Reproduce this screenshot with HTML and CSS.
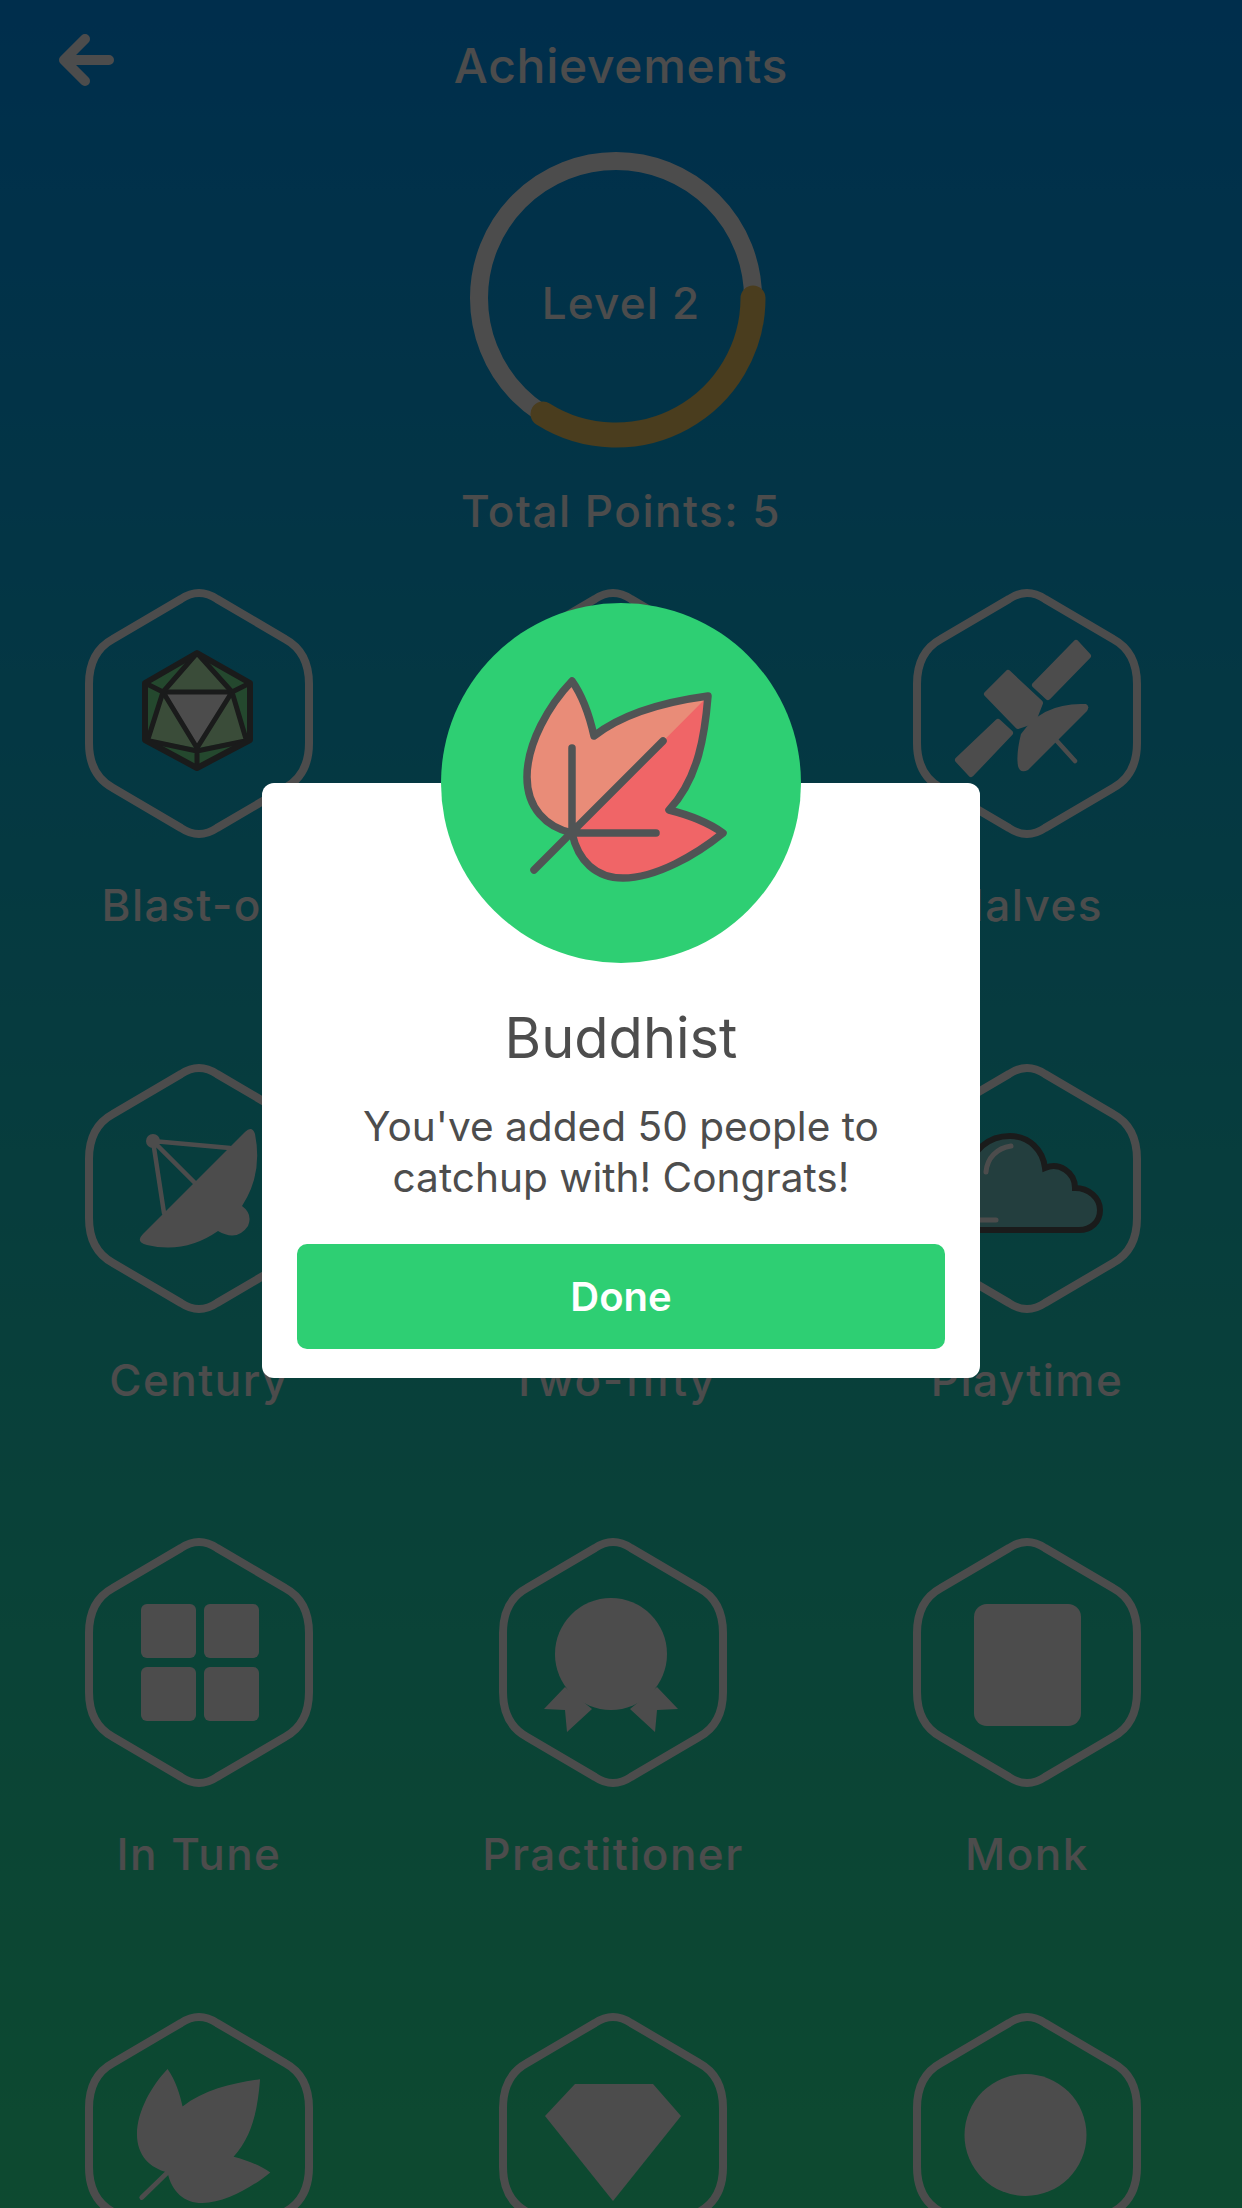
FILE: index.html
```html
<!DOCTYPE html>
<html>
<head>
  <meta charset="UTF-8">
  <title>Achievements</title>
  <link rel="stylesheet" href="styles.css">
</head>
<body>
  <div class="screen">
    <header class="topbar">
      <svg class="back" width="60" height="60" viewBox="0 0 60 60">
        <path d="M50 26H6M26 5L5 26L26 47"/>
      </svg>
      <h1>Achievements</h1>
    </header>

    <div class="level">
      <svg class="ring" width="310" height="310" viewBox="0 0 310 310">
        <circle class="ring-track" cx="150" cy="155" r="137"/>
        <path class="ring-value" d="M287 155A137 137 0 0 1 77 271"/>
      </svg>
      <span class="level-text">Level 2</span>
    </div>
    <p class="points">Total Points: 5</p>

    <div class="badges">
      <div class="badge">
        <svg class="hex" viewBox="0 0 228 249">
          <path class="hex-line" d="M96 10Q114 -2 132 10L200 50Q224 63 224 95V154Q224 186 200 199L132 239Q114 251 96 239L28 199Q4 186 4 154V95Q4 63 28 50Z"/>
          <g class="dice">
            <polygon class="dice-dark" points="112,64 165,94 165,151 112,179 60,151 60,94"/>
            <polygon class="dice-light" points="112,64 147,103 78,103"/>
            <polygon class="dice-light" points="78,103 112,159 63,150"/>
            <polygon class="dice-light" points="147,103 112,159 161,150"/>
            <polygon class="dice-top" points="78,103 147,103 112,159"/>
            <path d="M112 64L78 103M112 64L147 103M60 94L78 103M165 94L147 103M78 103L63 150M147 103L161 150M60 151L112 162L165 151M112 159V179"/>
            <polygon class="dice-outer" points="112,64 165,94 165,151 112,179 60,151 60,94"/>
          </g>
        </svg>
        <span class="badge-name">Blast-off</span>
      </div>

      <div class="badge">
        <svg class="hex" viewBox="0 0 228 249">
          <path class="hex-line" d="M96 10Q114 -2 132 10L200 50Q224 63 224 95V154Q224 186 200 199L132 239Q114 251 96 239L28 199Q4 186 4 154V95Q4 63 28 50Z"/>
        </svg>
      </div>

      <div class="badge">
        <svg class="hex" viewBox="0 0 228 249">
          <path class="hex-line" d="M96 10Q114 -2 132 10L200 50Q224 63 224 95V154Q224 186 200 199L132 239Q114 251 96 239L28 199Q4 186 4 154V95Q4 63 28 50Z"/>
          <polygon class="solid round" points="163,54 175,67 135,108 122,96"/>
          <polygon class="solid round" points="85,133 97,144 58,185 45,171"/>
          <polygon class="solid round" points="95,84 74,105 105,137 120,132 127,114"/>
          <path class="solid" d="M173 115Q130 113 108 145Q103 165 105 177Q107 185 115 181L174 122Q177 117 173 115Z"/>
          <path class="thin" d="M143 151L162 172"/>
        </svg>
        <span class="badge-name">Halves</span>
      </div>

      <div class="badge">
        <svg class="hex" viewBox="0 0 228 249">
          <path class="hex-line" d="M96 10Q114 -2 132 10L200 50Q224 63 224 95V154Q224 186 200 199L132 239Q114 251 96 239L28 199Q4 186 4 154V95Q4 63 28 50Z"/>
          <path class="solid" d="M58 170L160 68Q167 61 170 70Q178 110 157 142Q168 150 163 162Q152 178 133 167Q100 190 62 181Q50 178 58 170Z"/>
          <circle class="solid" cx="68" cy="77" r="7"/>
          <path class="thin" d="M145 84L68 77L110 119M68 77L79 149"/>
        </svg>
        <span class="badge-name">Century</span>
      </div>

      <div class="badge">
        <svg class="hex" viewBox="0 0 228 249">
          <path class="hex-line" d="M96 10Q114 -2 132 10L200 50Q224 63 224 95V154Q224 186 200 199L132 239Q114 251 96 239L28 199Q4 186 4 154V95Q4 63 28 50Z"/>
        </svg>
        <span class="badge-name">Two-fifty</span>
      </div>

      <div class="badge">
        <svg class="hex" viewBox="0 0 228 249">
          <path class="hex-line" d="M96 10Q114 -2 132 10L200 50Q224 63 224 95V154Q224 186 200 199L132 239Q114 251 96 239L28 199Q4 186 4 154V95Q4 63 28 50Z"/>
          <path class="cloud" d="M166 166H60C40 166 30 152 30 136C30 120 42 108 56 108C58 86 76 72 97 72C116 72 130 86 132 104C146 98 162 108 162 124C176 124 187 134 187 146C187 158 178 166 166 166Z"/>
          <path class="cloud-shine" d="M98 82C84 84 74 94 73 108M50 156H83"/>
        </svg>
        <span class="badge-name">Playtime</span>
      </div>

      <div class="badge">
        <svg class="hex" viewBox="0 0 228 249">
          <path class="hex-line" d="M96 10Q114 -2 132 10L200 50Q224 63 224 95V154Q224 186 200 199L132 239Q114 251 96 239L28 199Q4 186 4 154V95Q4 63 28 50Z"/>
          <rect class="solid" x="56" y="66" width="55" height="54" rx="6"/>
          <rect class="solid" x="119" y="66" width="55" height="54" rx="6"/>
          <rect class="solid" x="56" y="129" width="55" height="54" rx="6"/>
          <rect class="solid" x="119" y="129" width="55" height="54" rx="6"/>
        </svg>
        <span class="badge-name">In Tune</span>
      </div>

      <div class="badge">
        <svg class="hex" viewBox="0 0 228 249">
          <path class="hex-line" d="M96 10Q114 -2 132 10L200 50Q224 63 224 95V154Q224 186 200 199L132 239Q114 251 96 239L28 199Q4 186 4 154V95Q4 63 28 50Z"/>
          <circle class="solid" cx="112" cy="116" r="56"/>
          <polygon class="solid" points="66,149 45,171 66,172 68,194 93,171"/>
          <polygon class="solid" points="158,149 179,171 158,172 156,194 131,171"/>
        </svg>
        <span class="badge-name">Practitioner</span>
      </div>

      <div class="badge">
        <svg class="hex" viewBox="0 0 228 249">
          <path class="hex-line" d="M96 10Q114 -2 132 10L200 50Q224 63 224 95V154Q224 186 200 199L132 239Q114 251 96 239L28 199Q4 186 4 154V95Q4 63 28 50Z"/>
          <rect class="solid" x="61" y="66" width="107" height="122" rx="13"/>
        </svg>
        <span class="badge-name">Monk</span>
      </div>

      <div class="badge">
        <svg class="hex" viewBox="0 0 228 249">
          <path class="hex-line" d="M96 10Q114 -2 132 10L200 50Q224 63 224 95V154Q224 186 200 199L132 239Q114 251 96 239L28 199Q4 186 4 154V95Q4 63 28 50Z"/>
          <g transform="translate(-6.5 3) scale(.68)">
            <path class="solid" d="M131 78C143 95 149 115 153 133C185 108 230 98 267 93C264 130 258 175 228 207C248 212 268 220 282 230C255 252 215 275 182 275C155 275 137 258 131 230C105 224 86 205 86 174C86 140 108 102 131 78Z"/>
            <path class="thin wide" d="M131 230L93 267"/>
          </g>
        </svg>
      </div>

      <div class="badge">
        <svg class="hex" viewBox="0 0 228 249">
          <path class="hex-line" d="M96 10Q114 -2 132 10L200 50Q224 63 224 95V154Q224 186 200 199L132 239Q114 251 96 239L28 199Q4 186 4 154V95Q4 63 28 50Z"/>
          <polygon class="solid" points="76,71 154,71 182,103 114,188 46,103"/>
        </svg>
      </div>

      <div class="badge">
        <svg class="hex" viewBox="0 0 228 249">
          <path class="hex-line" d="M96 10Q114 -2 132 10L200 50Q224 63 224 95V154Q224 186 200 199L132 239Q114 251 96 239L28 199Q4 186 4 154V95Q4 63 28 50Z"/>
          <circle class="solid" cx="112.5" cy="122" r="61"/>
        </svg>
      </div>
    </div>
  </div>

  <div class="overlay">
    <div class="modal">
      <div class="modal-icon">
        <svg width="360" height="360" viewBox="0 0 360 360">
          <path class="leaf-red" d="M131 78C143 95 149 115 153 133C185 108 230 98 267 93C264 130 258 175 228 207C248 212 268 220 282 230C255 252 215 275 182 275C155 275 137 258 131 230C105 224 86 205 86 174C86 140 108 102 131 78Z"/>
          <path class="leaf-light" d="M131 78C143 95 149 115 153 133C185 108 230 98 267 93L131 230C105 224 86 205 86 174C86 140 108 102 131 78Z"/>
          <path class="leaf-line" d="M131 78C143 95 149 115 153 133C185 108 230 98 267 93C264 130 258 175 228 207C248 212 268 220 282 230C255 252 215 275 182 275C155 275 137 258 131 230C105 224 86 205 86 174C86 140 108 102 131 78Z"/>
          <path class="leaf-line" d="M93 267L222 138M131 145V230H215"/>
        </svg>
      </div>
      <h2>Buddhist</h2>
      <p>You've added 50 people to catchup with! Congrats!</p>
      <button type="button">Done</button>
    </div>
  </div>
</body>
</html>
```

FILE: styles.css
```css
html, body {
  margin: 0;
  padding: 0;
}
body {
  width: 1242px;
  height: 2208px;
  overflow: hidden;
  position: relative;
  font-family: Inter, "Liberation Sans", sans-serif;
}
.screen {
  height: 2208px;
  overflow: hidden;
  background: linear-gradient(to bottom, #009bff, #2ef7a0);
  color: #fff;
}
.topbar {
  display: grid;
  grid-template-columns: 1fr auto 1fr;
  align-items: start;
  height: 143px;
  padding: 0 60px;
  box-sizing: border-box;
}
.back {
  margin-top: 34px;
  margin-left: -1px;
}
.back path {
  fill: none;
  stroke: #fff;
  stroke-width: 10;
  stroke-linecap: round;
  stroke-linejoin: round;
}
h1 {
  margin: 36px 0 0;
  font-size: 48px;
  line-height: 60px;
  font-weight: 500;
  letter-spacing: 0.7px;
}
.level {
  position: relative;
  width: 310px;
  height: 310px;
  margin: 0 auto;
}
.ring {
  display: block;
}
.ring-track {
  fill: none;
  stroke: #fff;
  stroke-width: 18;
}
.ring-value {
  fill: none;
  stroke: #f7cb64;
  stroke-width: 25;
  stroke-linecap: round;
}
.level-text {
  position: absolute;
  top: 0;
  left: 0;
  right: 0;
  bottom: 0;
  display: flex;
  align-items: center;
  justify-content: center;
  padding-top: 10px;
  box-sizing: border-box;
  font-size: 44px;
  font-weight: 500;
  letter-spacing: 1.2px;
}
.points {
  margin: 33px 0 0;
  height: 103px;
  text-align: center;
  font-size: 44px;
  line-height: 50px;
  font-weight: 500;
  letter-spacing: 1.5px;
}
.badges {
  display: grid;
  grid-template-columns: repeat(3, 414px);
  grid-auto-rows: 474.5px;
  margin-left: -8px;
}
.badge {
  display: flex;
  flex-direction: column;
  align-items: center;
}
.hex {
  width: 228px;
  height: 249px;
  overflow: visible;
}
.hex-line {
  fill: none;
  stroke: #fff;
  stroke-width: 8;
}
.solid {
  fill: #fff;
}
.round {
  stroke: #fff;
  stroke-width: 6;
  stroke-linejoin: round;
}
.thin {
  fill: none;
  stroke: #fff;
  stroke-width: 4.5;
  stroke-linecap: round;
}
.wide {
  stroke-width: 7;
}
.badge-name {
  margin-top: 42px;
  font-size: 44px;
  line-height: 50px;
  font-weight: 500;
  letter-spacing: 1.5px;
}
.dice path, .dice polygon {
  stroke: #575a5b;
  stroke-width: 5;
  stroke-linejoin: round;
  fill: none;
}
.dice .dice-dark {
  fill: #78f099;
  stroke: none;
}
.dice .dice-light {
  fill: #c1ffbe;
  stroke: none;
}
.dice .dice-top {
  fill: #fff;
}
.dice .dice-outer {
  stroke-width: 6;
}
.cloud {
  fill: #76d0cf;
  stroke: #575a5b;
  stroke-width: 6;
}
.cloud-shine {
  fill: none;
  stroke: #fff;
  stroke-width: 5;
  stroke-linecap: round;
}
.overlay {
  position: absolute;
  top: 0;
  left: 0;
  right: 0;
  bottom: 0;
  display: flex;
  justify-content: center;
  align-items: flex-start;
  padding-top: 783px;
  box-sizing: border-box;
  background: rgba(0, 0, 0, 0.7);
}
.modal {
  width: 718px;
  height: 595px;
  padding: 0 35px 29px;
  box-sizing: border-box;
  background: #fff;
  border-radius: 12px;
  text-align: center;
  color: #4d4d4d;
}
.modal-icon {
  width: 360px;
  height: 360px;
  margin: -180px auto 0;
  border-radius: 50%;
  background: #2ecf73;
}
.modal-icon svg {
  display: block;
}
.leaf-red {
  fill: #f06567;
}
.leaf-light {
  fill: #e98c78;
}
.leaf-line {
  fill: none;
  stroke: #505455;
  stroke-width: 7.5;
  stroke-linecap: round;
  stroke-linejoin: round;
}
.modal h2 {
  margin: 40px 0 0;
  font-size: 56px;
  line-height: 70px;
  font-weight: 400;
}
.modal p {
  margin: 28px 0 0;
  font-size: 40.6px;
  line-height: 51px;
}
.modal button {
  display: block;
  width: 648px;
  height: 105px;
  margin-top: 41px;
  border: none;
  border-radius: 10px;
  background: #2ecf73;
  color: #fff;
  font-family: inherit;
  font-size: 40px;
  font-weight: 600;
}
```
